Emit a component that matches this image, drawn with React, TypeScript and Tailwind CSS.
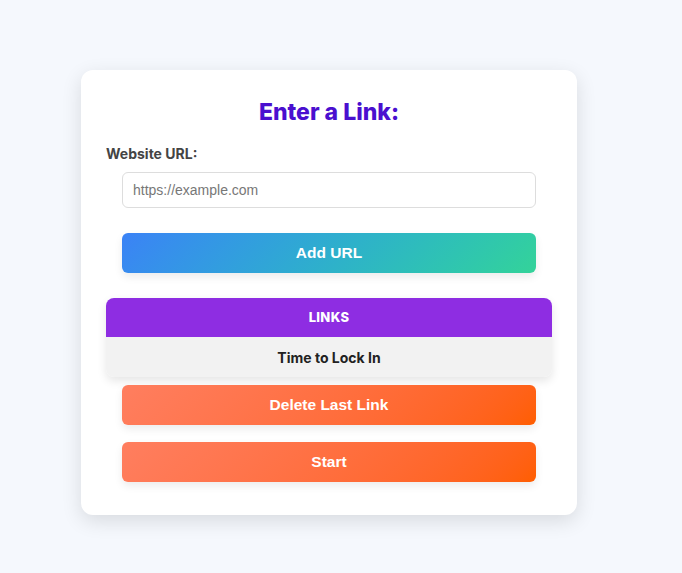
export default function App() {
  return (
    <div className="min-h-[573px] bg-[#f5f8fd] pt-[70px]">
      <div className="ml-[81px] w-[496px] rounded-xl bg-white px-[25px] pb-[33px] pt-[27px] shadow-[0_6px_20px_rgba(0,0,0,0.12)]">
        <h1 className="text-center font-['Inter',sans-serif] text-[23px] font-extrabold leading-[30px] text-[#4a0fcf]">
          Enter a Link:
        </h1>

        <label className="mt-[19px] block font-['Inter',sans-serif] text-[14px] font-bold leading-[16px] text-[#444]">
          Website URL:
        </label>

        <div className="mx-4 mt-[10px]">
          <input
            type="text"
            placeholder="https://example.com"
            className="h-9 w-full rounded-md border border-[#ddd] px-[10px] font-['Liberation_Sans',Arial,sans-serif] text-[14px] text-[#333] outline-none placeholder:text-[#777]"
          />
        </div>

        <div className="mx-4 mt-[25px]">
          <button className="h-10 w-full rounded-md bg-linear-135 from-[#3b82f6] to-[#34d399] font-['Liberation_Sans',Arial,sans-serif] text-[15.5px] font-bold text-white shadow-[0_4px_8px_rgba(0,0,0,0.08)]">
            Add URL
          </button>
        </div>

        <div className="mt-[25px] overflow-hidden rounded-lg shadow-[0_4px_10px_rgba(0,0,0,0.1)]">
          <div className="flex h-[39px] items-center justify-center bg-[#8e2de2] font-['Inter',sans-serif] text-[13px] font-extrabold tracking-wide text-white">
            LINKS
          </div>
          <div className="flex h-10 items-center justify-center bg-[#f2f2f2] font-['Inter',sans-serif] text-[14px] font-bold text-[#222]">
            Time to Lock In
          </div>
        </div>

        <div className="mx-4 mt-2 flex flex-col gap-[17px]">
          <button className="h-10 w-full rounded-md bg-linear-135 from-[#ff7e5f] to-[#ff5e00] font-['Liberation_Sans',Arial,sans-serif] text-[15.5px] font-bold text-white shadow-[0_4px_8px_rgba(0,0,0,0.08)]">
            Delete Last Link
          </button>
          <button className="h-10 w-full rounded-md bg-linear-135 from-[#ff7e5f] to-[#ff5e00] font-['Liberation_Sans',Arial,sans-serif] text-[15.5px] font-bold text-white shadow-[0_4px_8px_rgba(0,0,0,0.08)]">
            Start
          </button>
        </div>
      </div>
    </div>
  );
}
